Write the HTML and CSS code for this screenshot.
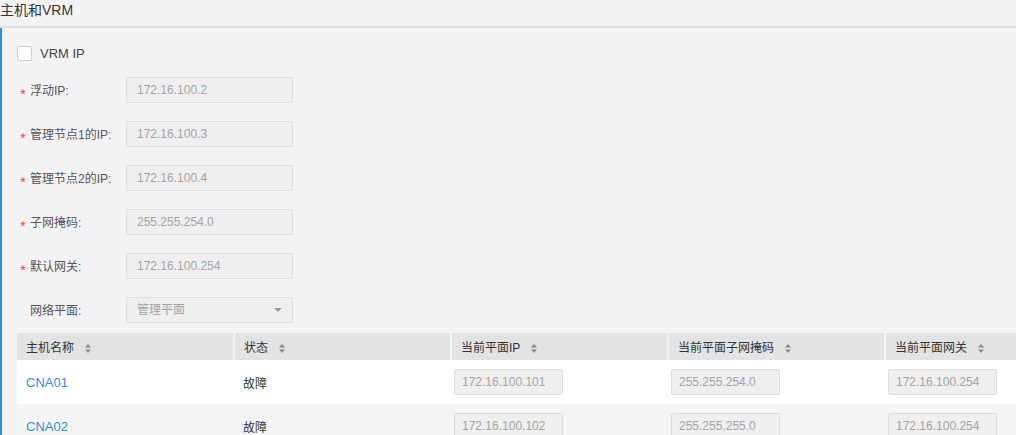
FILE: index.html
```html
<!DOCTYPE html>
<html lang="zh-CN">
<head>
  <meta charset="UTF-8">
  <title>主机和VRM</title>
  <link rel="stylesheet" href="styles.css">
</head>
<body>
  <div class="page-title">主机和VRM</div>
  <div class="panel">
    <label class="check-row">
      <span class="check-box"></span>
      <span>VRM IP</span>
    </label>

    <div class="form-row">
      <div class="form-label"><span class="star">*</span>浮动IP:</div>
      <div class="field">172.16.100.2</div>
    </div>
    <div class="form-row">
      <div class="form-label"><span class="star">*</span>管理节点1的IP:</div>
      <div class="field">172.16.100.3</div>
    </div>
    <div class="form-row">
      <div class="form-label"><span class="star">*</span>管理节点2的IP:</div>
      <div class="field">172.16.100.4</div>
    </div>
    <div class="form-row">
      <div class="form-label"><span class="star">*</span>子网掩码:</div>
      <div class="field">255.255.254.0</div>
    </div>
    <div class="form-row">
      <div class="form-label"><span class="star">*</span>默认网关:</div>
      <div class="field">172.16.100.254</div>
    </div>
    <div class="form-row last-row">
      <div class="form-label"><span class="star"></span>网络平面:</div>
      <div class="field select">
        <span>管理平面</span>
        <span class="caret"></span>
      </div>
    </div>

    <div class="table-wrap">
      <table class="host-table">
        <thead>
          <tr>
            <th>主机名称 <svg class="sort" width="6" height="9" viewBox="0 0 6 9"><path d="M3 0L6 3.5H0Z M3 9L6 5.5H0Z" fill="#8a8a8a"/></svg></th>
            <th>状态 <svg class="sort" width="6" height="9" viewBox="0 0 6 9"><path d="M3 0L6 3.5H0Z M3 9L6 5.5H0Z" fill="#8a8a8a"/></svg></th>
            <th>当前平面IP <svg class="sort" width="6" height="9" viewBox="0 0 6 9"><path d="M3 0L6 3.5H0Z M3 9L6 5.5H0Z" fill="#8a8a8a"/></svg></th>
            <th>当前平面子网掩码 <svg class="sort" width="6" height="9" viewBox="0 0 6 9"><path d="M3 0L6 3.5H0Z M3 9L6 5.5H0Z" fill="#8a8a8a"/></svg></th>
            <th>当前平面网关 <svg class="sort" width="6" height="9" viewBox="0 0 6 9"><path d="M3 0L6 3.5H0Z M3 9L6 5.5H0Z" fill="#8a8a8a"/></svg></th>
          </tr>
        </thead>
        <tbody>
          <tr>
            <td><a href="#" class="host-link">CNA01</a></td>
            <td>故障</td>
            <td class="ip-cell"><div class="cell-field">172.16.100.101</div></td>
            <td class="ip-cell"><div class="cell-field">255.255.254.0</div></td>
            <td class="ip-cell"><div class="cell-field">172.16.100.254</div></td>
          </tr>
          <tr>
            <td><a href="#" class="host-link">CNA02</a></td>
            <td>故障</td>
            <td class="ip-cell"><div class="cell-field">172.16.100.102</div></td>
            <td class="ip-cell"><div class="cell-field">255.255.255.0</div></td>
            <td class="ip-cell"><div class="cell-field">172.16.100.254</div></td>
          </tr>
        </tbody>
      </table>
    </div>
  </div>
</body>
</html>
```

FILE: styles.css
```css
html, body {
  margin: 0;
  padding: 0;
  overflow: hidden;
}

body {
  font-family: "Liberation Sans", "Noto Sans CJK SC", sans-serif;
  font-size: 12px;
  color: #555;
  background-color: #f3f3f5;
  height: 435px;
}

.page-title {
  height: 26px;
  line-height: 20px;
  font-size: 14px;
  color: #333;
  border-bottom: 2px solid #e0e0e2;
}

.panel {
  border-left: 2px solid #2a8ce8;
  padding: 12px 0 0 15px;
  height: 100%;
}

.check-row {
  display: flex;
  align-items: center;
  gap: 8px;
  height: 26px;
  margin-bottom: 11px;
  font-size: 13px;
  color: #444;
}

.check-box {
  width: 13px;
  height: 13px;
  background: #fff;
  border: 1px solid #cfcfd2;
  border-radius: 2px;
}

.form-row {
  display: flex;
  align-items: center;
  height: 26px;
  margin-bottom: 18px;
}

.form-row.last-row {
  margin-bottom: 0;
}

.form-label {
  width: 109px;
  color: #555;
}

.star {
  display: inline-block;
  width: 13px;
  padding-left: 3px;
  box-sizing: border-box;
  font-size: 15px;
  line-height: 12px;
  vertical-align: -4px;
  color: #e5484d;
}

.field {
  width: 167px;
  height: 26px;
  line-height: 24px;
  box-sizing: border-box;
  padding-left: 10px;
  border: 1px solid #dcdcde;
  border-radius: 2px;
  background: #efeff0;
  color: #a3a3a3;
}

.field.select {
  display: flex;
  justify-content: space-between;
  align-items: center;
  padding-right: 10px;
}

.caret {
  width: 0;
  height: 0;
  border-left: 4px solid transparent;
  border-right: 4px solid transparent;
  border-top: 4px solid #9a9a9a;
}

.table-wrap {
  margin-top: 10px;
  width: 1100px;
}

.host-table {
  border-collapse: collapse;
  table-layout: fixed;
  width: 1086px;
}

.host-table th {
  height: 27px;
  padding: 0 0 0 9px;
  text-align: left;
  font-weight: normal;
  color: #333;
  background: #e2e3e5;
  border-right: 2px solid #f3f3f5;
}

.sort {
  margin-left: 8px;
  vertical-align: -1px;
}

.host-table td {
  height: 44px;
  padding: 0 0 0 9px;
  color: #333;
}

.host-table tbody tr:nth-child(1) {
  background: #fff;
}

.host-table tbody tr:nth-child(2) {
  background: #f5f5f7;
}

.host-table td.ip-cell {
  padding-left: 3px;
}

.host-link {
  color: #3a8ad8;
  text-decoration: none;
  font-size: 13px;
}

.cell-field {
  width: 109px;
  height: 26px;
  line-height: 24px;
  box-sizing: border-box;
  padding-left: 7px;
  border: 1px solid #dcdcde;
  border-radius: 2px;
  background: #efeff0;
  color: #a3a3a3;
}
```
